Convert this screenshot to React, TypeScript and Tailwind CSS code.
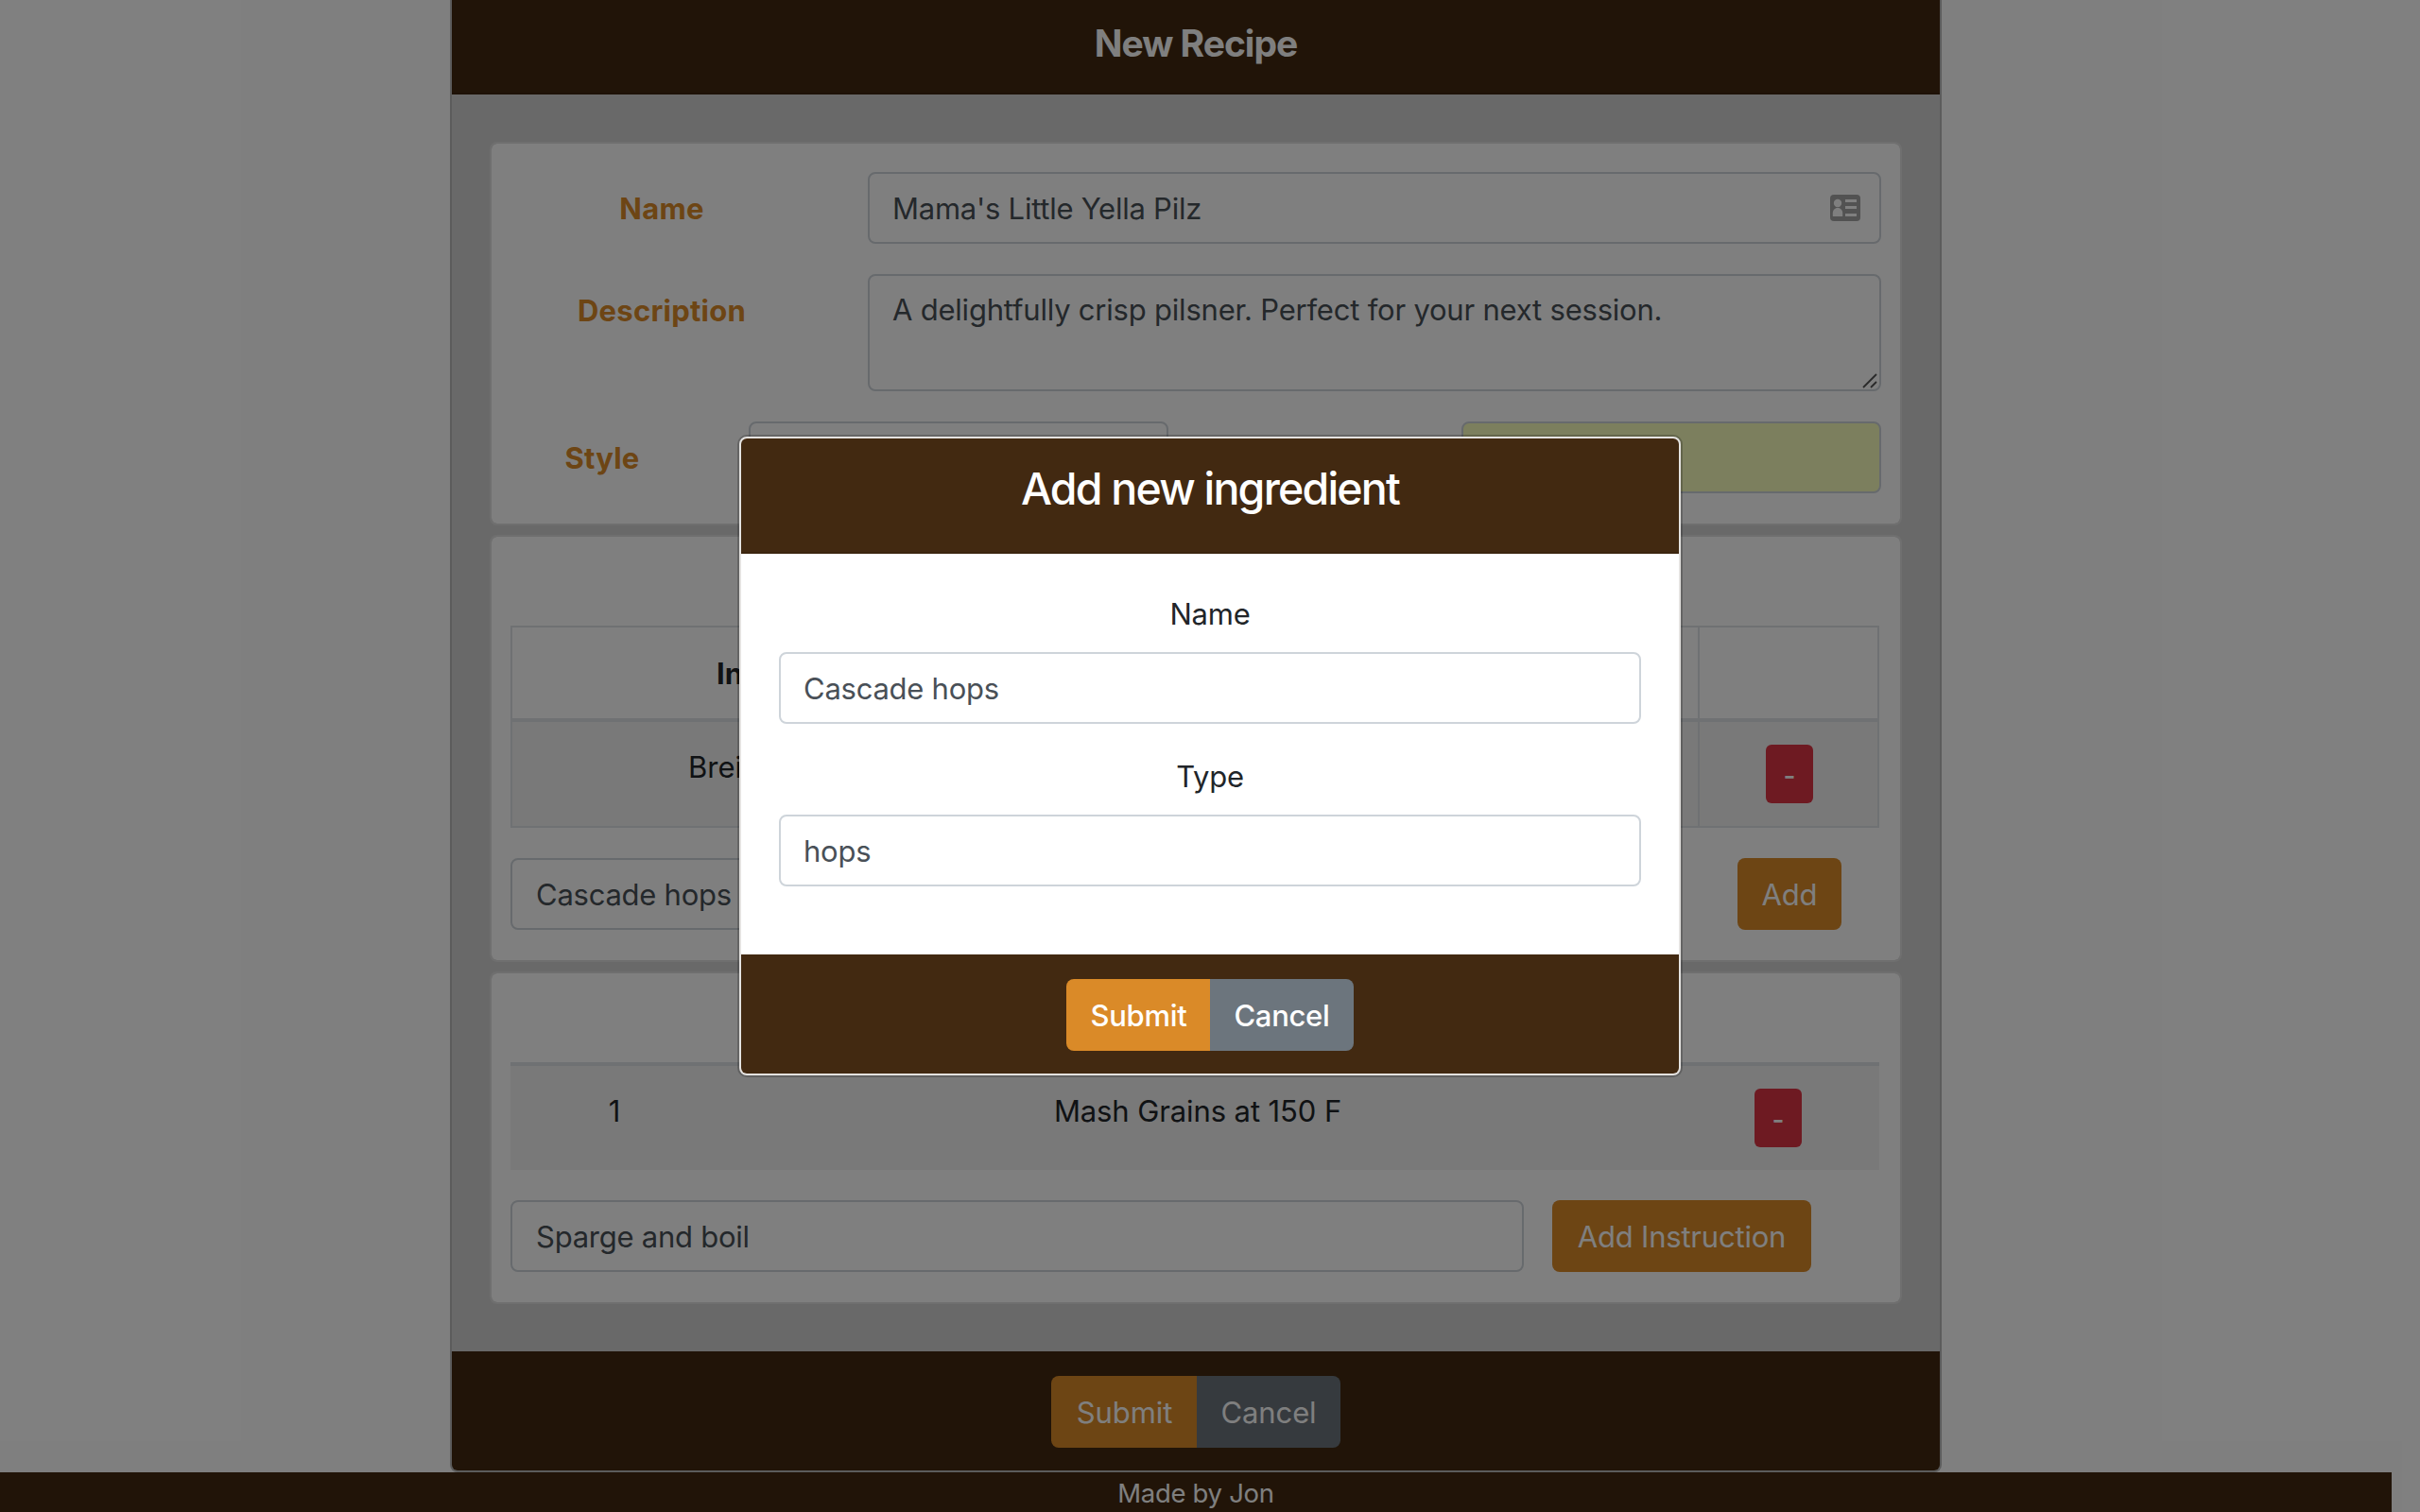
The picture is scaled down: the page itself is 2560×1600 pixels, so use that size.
import React from "react";

const BTN = "flex h-[76px] items-center justify-center pt-px text-[31px] text-white";
const INPUT = "flex h-[76px] items-center rounded-lg border-2 border-[#ced4da] bg-white px-6 text-[31px] text-[#495057]";
const CARD = "rounded-lg border-2 border-[#dedede] bg-white bg-clip-padding";
const LABEL = "flex h-[76px] items-center justify-center pr-[38px] pt-px font-bold tracking-[0.25px] text-[#da8a28]";

function Field({ text, className }: { text?: string; className: string }) {
  return (
    <div className={`${INPUT} ${className}`}>
      <span className="whitespace-pre pt-px tracking-[-0.25px]">{text}</span>
    </div>
  );
}

function RemoveButton() {
  return (
    <button className="flex h-[62px] w-[50px] items-center justify-center rounded-md bg-[#dc3545] pt-1 text-[28px] font-medium text-white">-</button>
  );
}

function Actions({ submit, className }: { submit: string; className: string }) {
  return (
    <div className={`flex ${className}`}>
      <button className={`${BTN} ${submit} rounded-l-lg bg-[#da8a28] pl-px`}>Submit</button>
      <button className={`${BTN} w-[152px] rounded-r-lg bg-[#6c757d]`}>Cancel</button>
    </div>
  );
}

function ContactIcon() {
  return (
    <svg viewBox="0 0 32 28" className="h-7 w-8">
      <rect width="32" height="28" rx="4" fill="#a5a5a5" />
      <g fill="#fff">
        <circle cx="8" cy="9" r="4.2" />
        <path d="M2.800 23v-3.500c0-3 1.900-5.500 5.200-5.500s5.200 2.500 5.200 5.500V23z" />
        <rect x="16" y="5" width="12" height="3" />
        <rect x="16" y="12" width="12" height="3" />
        <rect x="16" y="20" width="12" height="3" />
      </g>
    </svg>
  );
}

export default function App() {
  return (
    <div className="relative h-[1600px] w-[2560px] overflow-hidden bg-white font-['Inter',sans-serif] text-[31px] leading-[48px] text-[#212529]">
      <div className="w-[2530px]">
        <main className="mx-auto h-[1558px] w-[1578px] overflow-hidden rounded-b-lg border-x-2 border-b-2 border-[#b8b8b8] bg-[#d3d3d3]">
          <header className="flex h-[100px] items-center justify-center border-b-2 border-[#3c250f] bg-[#422911] pb-[7px] text-[39px] font-bold tracking-[-1px] text-white">
            New Recipe
          </header>

          <div className="flex h-[1330px] flex-col gap-[10px] px-10 pt-[50px]">
            <section className={`${CARD} h-[406px] pr-5 pt-[30px]`}>
              <div className="flex">
                <div className={`${LABEL} w-[398px]`}>Name</div>
                <div className={`${INPUT} w-[1072px] justify-between pr-5`}>
                  <span className="pt-px tracking-[-0.25px]">Mama's Little Yella Pilz</span>
                  <ContactIcon />
                </div>
              </div>
              <div className="mt-8 flex">
                <div className={`${LABEL} w-[398px]`}>Description</div>
                <div className="relative h-[124px] w-[1072px] rounded-lg border-2 border-[#ced4da] px-6 pt-[12px] tracking-[-0.21px] text-[#495057]">
                  A delightfully crisp pilsner. Perfect for your next session.
                  <svg viewBox="0 0 16 16" className="absolute bottom-px right-[2px] h-4 w-4" stroke="#555" strokeWidth="1.8">
                    <path d="M1 15L15 1M9 15l6-6" />
                  </svg>
                </div>
              </div>
              <div className="mt-8 flex">
                <div className={`${LABEL} w-[272px]`}>Style</div>
                <Field className="w-[444px]" />
                <div className="ml-[310px] h-[76px] w-[444px] rounded-lg border-2 border-[#ced4da] bg-[#f8ffbc]" />
              </div>
            </section>

            <section className={`${CARD} h-[452px] px-5 pt-[94px]`}>
              <div className="w-[1448px] border-2 border-[#dee2e6]">
                <div className="flex h-[100px] border-b-4 border-[#dee2e6]">
                  <div className="flex w-[1256px] items-center border-r-2 border-[#dee2e6] pl-[216px] pt-px font-bold">In</div>
                  <div className="flex-1" />
                </div>
                <div className="flex h-[110px] bg-[#f2f2f2]">
                  <div className="w-[1256px] border-r-2 border-[#dee2e6] pl-[186px] pt-6">Brei</div>
                  <div className="flex flex-1 justify-center pl-[2px] pt-6"><RemoveButton /></div>
                </div>
              </div>
              <div className="mt-8 flex">
                <Field text="Cascade hops" className="w-[620px] pl-[25px]" />
                <button className={`${BTN} ml-[678px] w-[110px] rounded-lg bg-[#da8a28] tracking-[-0.2px]`}>Add</button>
              </div>
            </section>

            <section className={`${CARD} h-[352px] px-5 pt-[94px]`}>
              <div className="flex h-[114px] w-[1448px] border-t-4 border-[#dee2e6] bg-[#f2f2f2] pt-6">
                <div className="w-[220px] text-center">1</div>
                <div className="w-[1014px] text-center tracking-[-0.1px]">Mash Grains at 150 F</div>
                <div className="pl-[82px]"><RemoveButton /></div>
              </div>
              <div className="mt-8 flex">
                <Field text="Sparge and boil" className="w-[1072px] pl-[25px]" />
                <button className={`${BTN} ml-[30px] w-[274px] rounded-lg bg-[#da8a28] tracking-[-0.2px]`}>Add Instruction</button>
              </div>
            </section>
          </div>

          <div className="flex h-[126px] justify-center bg-[#422911] pt-[26px]">
            <Actions submit="w-[154px]" className="tracking-[-0.1px]" />
          </div>
        </main>
        <footer className="flex h-[42px] items-center justify-center bg-[#422911] pt-px text-[27.5px] tracking-[-0.3px] text-white">Made by Jon</footer>
      </div>

      <div className="absolute inset-0 flex items-start justify-center bg-black/50 pt-[462px]">
        <div role="dialog" className="w-[996px] overflow-hidden rounded-lg border-2 border-[#e4e2e0] bg-white ring-2 ring-black/20">
          <h4 className="flex h-[122px] justify-center border-b-2 border-[#3c250f] bg-[#422911] pt-[24px] text-[46.5px] font-medium leading-[58px] tracking-[-1.8px] text-white">
            Add new ingredient
          </h4>
          <div className="flex h-[424px] flex-col px-10 pt-10 text-center tracking-[-0.25px]">
            <label className="mb-4">Name</label>
            <Field text="Cascade hops" className="w-[912px]" />
            <label className="mb-4 mt-8">Type</label>
            <Field text="hops" className="w-[912px]" />
          </div>
          <div className="flex h-[126px] justify-center bg-[#422911] pt-[26px]">
            <Actions submit="w-[152px]" className="font-medium tracking-[-0.3px]" />
          </div>
        </div>
      </div>
    </div>
  );
}
